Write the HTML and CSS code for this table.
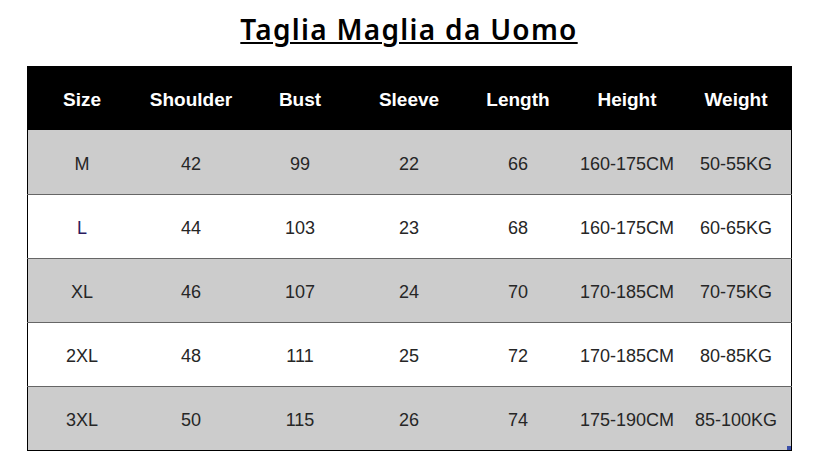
FILE: index.html
```html
<!DOCTYPE html>
<html>
<head>
<meta charset="utf-8">
<link rel="stylesheet" href="styles.css">
</head>
<body>
<div class="page">
  <h1 class="title">Taglia Maglia da Uomo</h1>
  <div class="table-wrap">
    <table class="sizes">
      <thead>
        <tr><th>Size</th><th>Shoulder</th><th>Bust</th><th>Sleeve</th><th>Length</th><th>Height</th><th>Weight</th></tr>
      </thead>
      <tbody>
        <tr class="gray"><td>M</td><td>42</td><td>99</td><td>22</td><td>66</td><td>160-175CM</td><td>50-55KG</td></tr>
        <tr><td class="size-l">L</td><td>44</td><td>103</td><td>23</td><td>68</td><td>160-175CM</td><td>60-65KG</td></tr>
        <tr class="gray"><td>XL</td><td>46</td><td>107</td><td>24</td><td>70</td><td>170-185CM</td><td>70-75KG</td></tr>
        <tr><td>2XL</td><td>48</td><td>111</td><td>25</td><td>72</td><td>170-185CM</td><td>80-85KG</td></tr>
        <tr class="gray"><td>3XL</td><td>50</td><td>115</td><td>26</td><td>74</td><td>175-190CM</td><td>85-100KG</td></tr>
      </tbody>
    </table>
    <span class="handle"></span>
  </div>
</div>
</body>
</html>
```

FILE: styles.css
```css
html, body {
  margin: 0;
  padding: 0;
  background: #ffffff;
}

.page {
  width: 816px;
  height: 469px;
  display: flex;
  flex-direction: column;
  align-items: center;
  padding-top: 10px;
  box-sizing: border-box;
}

.title {
  margin: 0;
  font-family: "Noto Sans", "Open Sans", sans-serif;
  font-weight: 600;
  font-size: 28px;
  letter-spacing: 1.3px;
  line-height: 38px;
  height: 38px;
  color: #000;
  text-decoration: underline;
  text-decoration-thickness: 2px;
  text-underline-offset: 2px;
  margin-bottom: 18px;
  margin-left: 2px;
}

.table-wrap {
  position: relative;
  margin-left: 2px;
}

.sizes {
  border-collapse: collapse;
  border: 1px solid #000;
  font-family: "Liberation Sans", Arial, sans-serif;
  table-layout: fixed;
}

.sizes th,
.sizes td {
  width: 109px;
  padding: 0;
  text-align: center;
  vertical-align: middle;
}

.sizes th {
  height: 60px;
  padding-top: 3px;
  background: #000;
  color: #fff;
  font-size: 19px;
  font-weight: bold;
}

.sizes td {
  height: 59px;
  padding-top: 4px;
  font-size: 18px;
  color: #262626;
  border-top: 1px solid #666;
}

.sizes thead + tbody tr:first-child td {
  border-top: none;
  height: 60px;
}

.sizes tr.gray td {
  background: #cccccc;
}

.sizes td.size-l {
  color: #2a1a5e;
}

.handle {
  position: absolute;
  right: 1px;
  bottom: 1px;
  width: 4px;
  height: 4px;
  background: #3b4fa8;
}
```
